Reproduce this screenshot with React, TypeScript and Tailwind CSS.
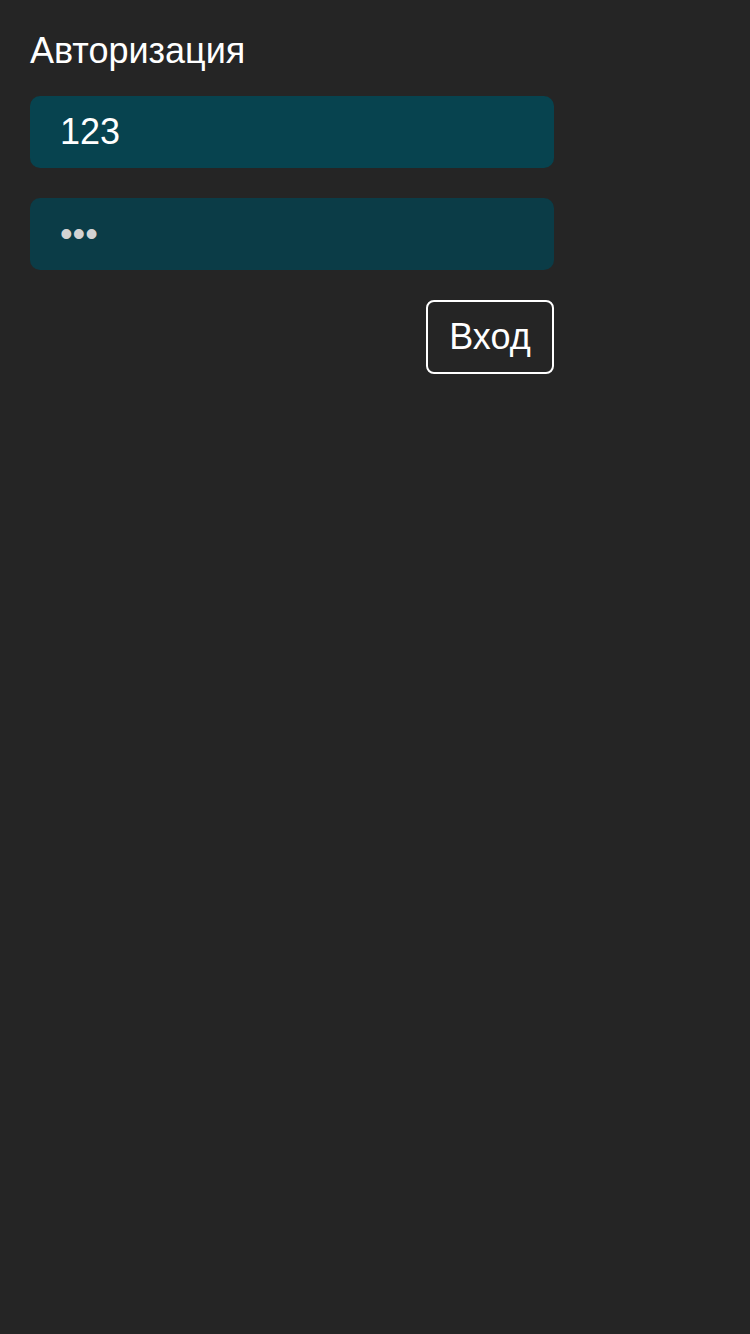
import React, { useState } from 'react';

const App: React.FC = () => {
  const [login, setLogin] = useState("123");
  const [password, setPassword] = useState("123");

  return (
    <div className="min-h-[1334px] w-full bg-[#252525] p-[30px] font-['Liberation_Sans',Arial,sans-serif] text-white">
      <h1 className="text-[36px] leading-[41px] font-normal mb-[25px]">Авторизация</h1>
      <div className="w-[524px] flex flex-col gap-[30px]">
        <input
          className="h-[72px] w-full rounded-[10px] bg-[#07434f] px-[30px] text-[36px] text-white outline-none"
          type="text"
          value={login}
          onChange={(e) => setLogin(e.target.value)}
        />
        <input
          className="h-[72px] w-full rounded-[10px] bg-[#0b3c47] px-[30px] text-[36px] text-[#d3d3d3] outline-none"
          type="password"
          value={password}
          onChange={(e) => setPassword(e.target.value)}
        />
        <div className="flex justify-end">
          <button className="h-[74px] w-[128px] rounded-[8px] border-2 border-white bg-transparent flex items-center justify-center text-[36px] text-white">
            Вход
          </button>
        </div>
      </div>
    </div>
  );
};

export default App;
